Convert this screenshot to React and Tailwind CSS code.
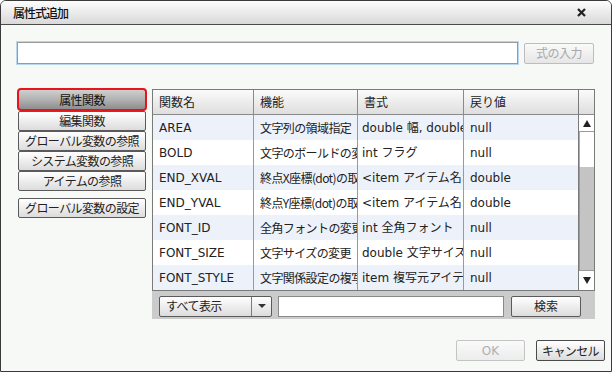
import React from "react";

const jp = { fontFamily: '"Noto Sans CJK JP", sans-serif' };
const mix = { fontFamily: '"DejaVu Sans", "Noto Sans CJK JP", sans-serif' };

const rows = [
  ["AREA", "文字列の領域指定", "double 幅, double 高さ", "null"],
  ["BOLD", "文字のボールドの変更", "int フラグ", "null"],
  ["END_XVAL", "終点X座標(dot)の取得", "<item アイテム名>", "double"],
  ["END_YVAL", "終点Y座標(dot)の取得", "<item アイテム名>", "double"],
  ["FONT_ID", "全角フォントの変更", "int 全角フォント", "null"],
  ["FONT_SIZE", "文字サイズの変更", "double 文字サイズ", "null"],
  ["FONT_STYLE", "文字関係設定の複写", "item 複写元アイテム", "null"],
];

function SideBtn({ children, className = "" }) {
  return (
    <div
      className={`mx-px h-[20px] flex items-center justify-center rounded-[2px] border border-[#5a5a5a] bg-gradient-to-b from-white to-[#dcdcdc] text-[12px] text-[#222] tracking-[-0.6px] ${className}`}
      style={jp}
    >
      {children}
    </div>
  );
}

export default function App() {
  return (
    <div className="w-[612px] h-[372px] overflow-hidden">
      <div className="w-[612px] h-[372px] flex flex-col border border-[#3a3a3a] rounded-t-[6px] overflow-hidden bg-[#f7f9f7]">
        {/* Title bar */}
        <div className="h-[24px] shrink-0 flex items-center justify-between border-b border-[#4a4a4a] bg-gradient-to-b from-[#fdfdfd] to-[#d9d9d9] pl-[12px] pr-[25px]">
          <span className="text-[12px] font-medium text-[#111] tracking-[-1px]" style={jp}>
            属性式追加
          </span>
          <svg width="9" height="9" viewBox="0 0 9 9">
            <path d="M1 1 L8 8 M8 1 L1 8" stroke="#222" strokeWidth="2.2" />
          </svg>
        </div>

        {/* Body */}
        <div className="flex-1 flex flex-col pl-[16px] pr-[16px]">
          <div className="flex items-center gap-[6px] mt-[17px]">
            <div className="w-[501px] h-[22px] bg-white border border-[#9a9a9a] shadow-[0_0_0_1px_#b8d6ee]" />
            <div
              className="w-[70px] h-[21px] flex items-center justify-center rounded-[2px] border border-[#bdbdbd] bg-gradient-to-b from-[#fafafa] to-[#e6e6e6] text-[12px] text-[#a8a8a8] tracking-[-0.5px]"
              style={jp}
            >
              式の入力
            </div>
          </div>

          <div className="flex mt-[25px] gap-[5px]">
            {/* left column */}
            <div className="w-[130px] flex flex-col -mt-px">
              <div
                className="h-[23px] flex items-center justify-center rounded-[4px] border-2 border-[#e8141a] bg-gradient-to-b from-[#cfcfcf] via-[#b2b2b2] to-[#8e8e8e] text-[12px] text-[#111] tracking-[-0.6px]"
                style={jp}
              >
                属性関数
              </div>
              <SideBtn>編集関数</SideBtn>
              <SideBtn>グローバル変数の参照</SideBtn>
              <SideBtn>システム変数の参照</SideBtn>
              <SideBtn>アイテムの参照</SideBtn>
              <SideBtn className="mt-[7px]">グローバル変数の設定</SideBtn>
            </div>

            {/* grid panel */}
            <div className="w-[443px] h-[230px] bg-[#cbcbcb] flex flex-col">
              <div className="flex-1 flex border border-[#7a7a7a] bg-white">
                <div className="flex-1 flex flex-col">
                  {/* header */}
                  <div
                    className="h-[25px] flex border-b border-[#8a8a8a] bg-gradient-to-b from-[#fbfbfb] to-[#dedede] text-[12px] text-[#222]"
                    style={jp}
                  >
                    <div className="w-[101px] pl-[6px] flex items-center border-r border-[#8a8a8a]">関数名</div>
                    <div className="w-[104px] pl-[6px] flex items-center border-r border-[#8a8a8a]">機能</div>
                    <div className="w-[106px] pl-[6px] flex items-center border-r border-[#8a8a8a]">書式</div>
                    <div className="flex-1 pl-[6px] flex items-center">戻り値</div>
                  </div>
                  {rows.map((r, i) => (
                    <div
                      key={r[0]}
                      className={`h-[25px] flex text-[12px] text-[#222] ${i % 2 === 0 ? "bg-[#edf2fa]" : "bg-white"}`}
                      style={mix}
                    >
                      <div className="w-[101px] pl-[6px] flex items-center border-r border-[#9a9a9a] overflow-hidden whitespace-nowrap">{r[0]}</div>
                      <div className="w-[104px] pl-[6px] flex items-center border-r border-[#9a9a9a] overflow-hidden whitespace-nowrap tracking-[-0.6px]" style={jp}>{r[1]}</div>
                      <div className="w-[106px] pl-[4px] flex items-center border-r border-[#9a9a9a] overflow-hidden whitespace-nowrap">{r[2]}</div>
                      <div className="flex-1 pl-[6px] flex items-center overflow-hidden whitespace-nowrap">{r[3]}</div>
                    </div>
                  ))}
                </div>
                {/* scrollbar column */}
                <div className="w-[16px] flex flex-col border-l border-[#7a7a7a]">
                  <div className="h-[25px] border-b border-[#8a8a8a] bg-gradient-to-b from-[#fbfbfb] to-[#dedede]" />
                  <div className="h-[17px] flex items-center justify-center bg-white border-b border-[#9a9a9a]">
                    <svg width="8" height="7" viewBox="0 0 8 7"><path d="M4 0 L8 7 L0 7 Z" fill="#222" /></svg>
                  </div>
                  <div className="h-[35px] bg-white border-l border-[#aaa]" />
                  <div className="flex-1 bg-[#c4c4c4] border-l border-[#9a9a9a]" />
                  <div className="h-[20px] flex items-center justify-center bg-white border-t border-[#9a9a9a]">
                    <svg width="8" height="7" viewBox="0 0 8 7"><path d="M0 0 L8 0 L4 7 Z" fill="#222" /></svg>
                  </div>
                </div>
              </div>
              {/* toolbar */}
              <div className="h-[30px] shrink-0 flex items-center pl-[7px] gap-[6px]">
                <div className="w-[113px] h-[21px] flex rounded-[2px] border border-[#5a5a5a] bg-gradient-to-b from-white to-[#dcdcdc]">
                  <div className="flex-1 flex items-center pl-[6px] text-[12px] text-[#222] tracking-[-0.6px] border-r border-[#7a7a7a]" style={jp}>
                    すべて表示
                  </div>
                  <div className="w-[19px] flex items-center justify-center">
                    <svg width="8" height="4" viewBox="0 0 8 4"><path d="M0 0 L8 0 L4 4 Z" fill="#333" /></svg>
                  </div>
                </div>
                <div className="w-[226px] h-[21px] bg-white border border-[#8a8a8a]" />
                <div
                  className="ml-px w-[70px] h-[21px] flex items-center justify-center rounded-[2px] border border-[#5a5a5a] bg-gradient-to-b from-white to-[#dcdcdc] text-[12px] text-[#222]"
                  style={jp}
                >
                  検索
                </div>
              </div>
            </div>
          </div>

          {/* bottom buttons */}
          <div className="flex justify-end gap-[11px] mt-[21px] -mr-[10px]">
            <div
              className="w-[69px] h-[21px] flex items-center justify-center rounded-[2px] border border-[#c4c4c4] bg-gradient-to-b from-[#fafafa] to-[#ececec] text-[12px] text-[#b0b0b0]"
              style={mix}
            >
              OK
            </div>
            <div
              className="w-[69px] h-[21px] flex items-center justify-center rounded-[2px] border border-[#4a4a4a] bg-gradient-to-b from-white to-[#dcdcdc] text-[12px] text-[#222] tracking-[-0.6px]"
              style={jp}
            >
              キャンセル
            </div>
          </div>
        </div>
      </div>
    </div>
  );
}
